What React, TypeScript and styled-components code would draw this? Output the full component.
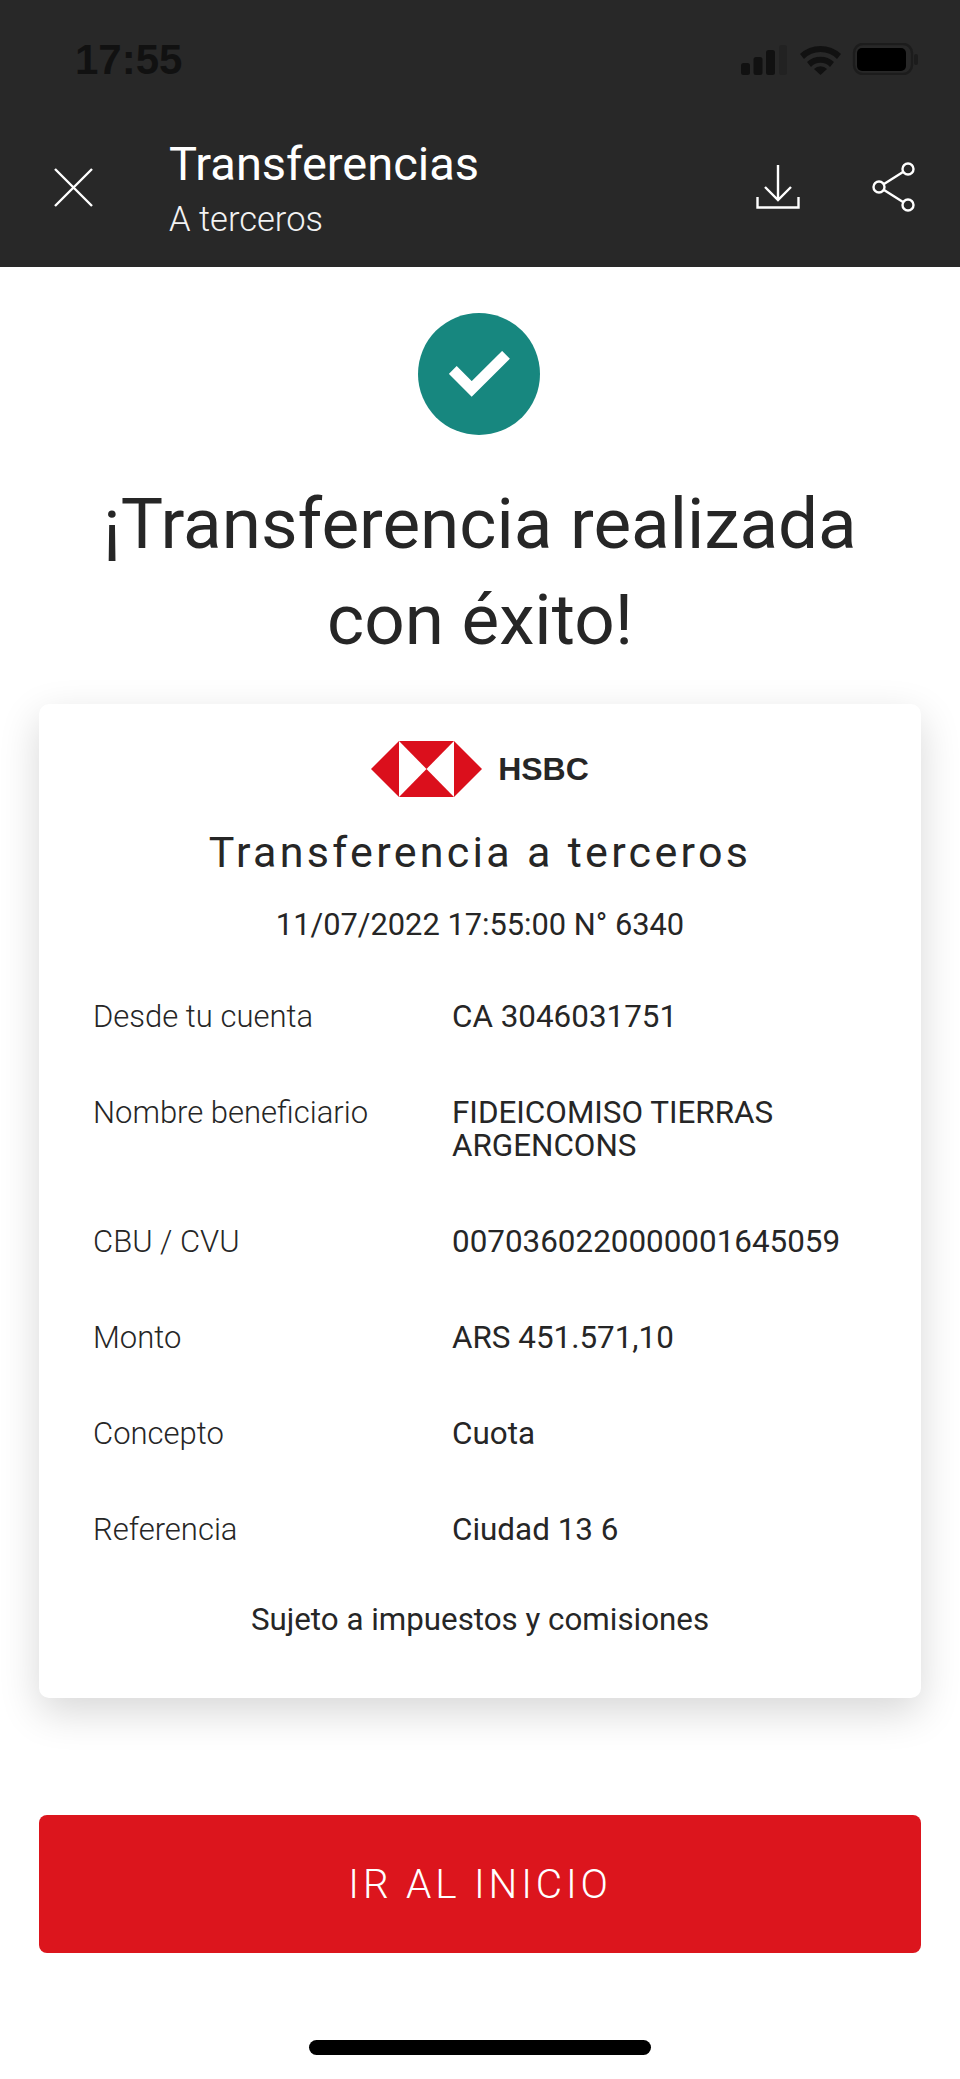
import React from 'react';
import styled, { createGlobalStyle } from 'styled-components';

const GlobalStyle = createGlobalStyle`
  html, body {
    margin: 0;
    padding: 0;
    background: #fff;
  }
  * {
    box-sizing: border-box;
  }
`;

const Page = styled.div`
  width: 960px;
  height: 2079px;
  display: flex;
  flex-direction: column;
  font-family: 'Roboto', 'Liberation Sans', sans-serif;
  color: #262626;
  background: #fff;
  overflow: hidden;
`;

const Header = styled.header`
  height: 267px;
  flex: none;
  background: #282828;
  display: flex;
  flex-direction: column;
`;

const StatusBar = styled.div`
  height: 118px;
  padding: 40px 42px 0 75px;
  display: flex;
  justify-content: space-between;
`;

const Clock = styled.span`
  font-family: 'Liberation Sans', sans-serif;
  font-size: 42px;
  line-height: 40px;
  font-weight: 700;
  color: #111;
`;

const StatusIcons = styled.svg`
  width: 177px;
  height: 32px;
  margin-top: 3px;
`;

const NavBar = styled.div`
  display: flex;
  align-items: flex-start;
  padding: 0 45px 0 54px;
`;

const NavIcon = styled.svg`
  flex: none;
  fill: none;
  stroke: #fff;
  stroke-width: 2.4;
`;

const CloseIcon = styled(NavIcon)`
  width: 39px;
  height: 39px;
  margin-top: 50px;
`;

const NavTitles = styled.div`
  margin-left: 76px;
  flex: 1;
  color: #fff;
`;

const NavTitle = styled.div`
  font-size: 47px;
  line-height: 50px;
  margin-top: 21px;
  font-weight: 400;
`;

const NavSubtitle = styled.div`
  font-size: 34.5px;
  font-weight: 300;
  line-height: 38px;
  margin-top: 11px;
  color: #f2f2f2;
`;

const DownloadIcon = styled(NavIcon)`
  width: 44px;
  height: 44px;
  margin-top: 47px;
`;

const ShareIcon = styled(NavIcon)`
  width: 45px;
  height: 50px;
  margin: 44px 0 0 70px;
`;

const SuccessBadge = styled.div`
  width: 122px;
  height: 122px;
  border-radius: 50%;
  background: #17877f;
  margin: 46px 0 0 418px;
  display: flex;
  align-items: center;
  justify-content: center;
`;

const Headline = styled.h1`
  margin: 41px 0 0;
  font-size: 71px;
  line-height: 96px;
  font-weight: 400;
  text-align: center;
  color: #262626;
`;

const Card = styled.section`
  margin: 36px 39px 0;
  height: 994px;
  border-radius: 10px;
  background: #fff;
  box-shadow: 0 14px 40px rgba(0, 0, 0, 0.16);
  padding-top: 37px;
  display: flex;
  flex-direction: column;
  align-items: center;
`;

const Brand = styled.div`
  display: flex;
  align-items: center;
  gap: 16px;
  height: 56px;
`;

const BrandName = styled.span`
  font-family: 'Liberation Sans', sans-serif;
  font-size: 32px;
  font-weight: 700;
  color: #262626;
`;

const CardTitle = styled.h2`
  margin: 31px 0 0;
  font-size: 43px;
  line-height: 48px;
  font-weight: 400;
  letter-spacing: 3.3px;
`;

const Stamp = styled.div`
  margin-top: 30px;
  font-size: 30.8px;
  line-height: 38px;
  font-weight: 400;
`;

const Rows = styled.dl`
  margin: 56px 0 0;
  width: 100%;
  padding: 0 54px;
  display: flex;
  flex-direction: column;
  gap: 62.25px;
`;

const Row = styled.div`
  display: grid;
  grid-template-columns: 359px 1fr;
`;

const RowLabel = styled.dt`
  font-size: 31px;
  line-height: 34px;
  font-weight: 300;
`;

const RowValue = styled.dd`
  margin: 0;
  font-size: 31.4px;
  line-height: 33px;
  font-weight: 400;
`;

const Note = styled.div`
  margin-top: 54.5px;
  font-size: 31.3px;
  line-height: 36px;
`;

const PrimaryButton = styled.button`
  display: block;
  margin: 117px 39px 0;
  height: 138px;
  flex: none;
  border: none;
  border-radius: 8px;
  background: #dc151d;
  color: #fff;
  font-family: inherit;
  font-size: 40.5px;
  font-weight: 300;
  letter-spacing: 3.8px;
`;

const HomeIndicator = styled.div`
  width: 342px;
  height: 15px;
  margin: 87px auto 0;
  border-radius: 8px;
  background: #000;
  flex: none;
`;

const rows = [
  { label: 'Desde tu cuenta', value: 'CA 3046031751' },
  { label: 'Nombre beneficiario', value: 'FIDEICOMISO TIERRAS ARGENCONS' },
  { label: 'CBU / CVU', value: '0070360220000001645059' },
  { label: 'Monto', value: 'ARS 451.571,10' },
  { label: 'Concepto', value: 'Cuota' },
  { label: 'Referencia', value: 'Ciudad 13 6' },
];

const App: React.FC = () => (
  <>
    <GlobalStyle />
    <Page>
      <Header>
        <StatusBar>
          <Clock>17:55</Clock>
          <StatusIcons viewBox="0 0 177 32">
            <rect x="0" y="20" width="9" height="12" rx="2.5" fill="#111" />
            <rect x="12.5" y="14" width="9" height="18" rx="2.5" fill="#111" />
            <rect x="25" y="7" width="9" height="25" rx="2.5" fill="#111" />
            <rect x="38" y="2" width="8" height="30" rx="2.5" fill="#222" />
            <path d="M59 11a30 30 0 0 1 41 0l-4 5a23 23 0 0 0-33 0z" fill="#111" />
            <path d="M66 19a20 20 0 0 1 27 0l-4 5a13 13 0 0 0-19 0z" fill="#111" />
            <path d="M73 26a9 9 0 0 1 13 0l-6.500 6z" fill="#111" />
            <rect x="113" y="1" width="58" height="30" rx="9" fill="none" stroke="#1c1c1c" strokeWidth="2.5" />
            <rect x="116" y="5" width="49" height="23" rx="5" fill="#000" />
            <rect x="173" y="11" width="4" height="11" rx="2" fill="#1c1c1c" />
          </StatusIcons>
        </StatusBar>
        <NavBar>
          <CloseIcon viewBox="0 0 39 39">
            <path d="M1 1l37 37M38 1L1 38" />
          </CloseIcon>
          <NavTitles>
            <NavTitle>Transferencias</NavTitle>
            <NavSubtitle>A terceros</NavSubtitle>
          </NavTitles>
          <DownloadIcon viewBox="0 0 44 44">
            <path d="M22 0v35M9 22l13 13 13-13M1.500 32v10.500h41V32" />
          </DownloadIcon>
          <ShareIcon viewBox="0 0 45 50">
            <circle cx="38" cy="7" r="5.500" />
            <circle cx="9" cy="25" r="5.500" />
            <circle cx="38" cy="43" r="5.500" />
            <path d="M14 22l19-12M14 28l19 12" />
          </ShareIcon>
        </NavBar>
      </Header>

      <SuccessBadge>
        <svg width="61" height="46" viewBox="0 0 61 46">
          <path d="M3.800 19L22.700 38L57 3.800" fill="none" stroke="#fff" strokeWidth="11" />
        </svg>
      </SuccessBadge>
      <Headline>
        ¡Transferencia realizada
        <br />
        con éxito!
      </Headline>

      <Card>
        <Brand>
          <svg width="111" height="56" viewBox="0 0 111 56">
            <path d="M0 28L28 0v56z" fill="#db0f1c" />
            <path d="M111 28L83 0v56z" fill="#db0f1c" />
            <path d="M28 0h55L55.500 28z" fill="#db0f1c" />
            <path d="M28 56h55L55.500 28z" fill="#db0f1c" />
          </svg>
          <BrandName>HSBC</BrandName>
        </Brand>
        <CardTitle>Transferencia a terceros</CardTitle>
        <Stamp>11/07/2022 17:55:00 N° 6340</Stamp>
        <Rows>
          {rows.map((row) => (
            <Row key={row.label}>
              <RowLabel>{row.label}</RowLabel>
              <RowValue>{row.value}</RowValue>
            </Row>
          ))}
        </Rows>
        <Note>Sujeto a impuestos y comisiones</Note>
      </Card>

      <PrimaryButton>IR AL INICIO</PrimaryButton>
      <HomeIndicator />
    </Page>
  </>
);

export default App;
